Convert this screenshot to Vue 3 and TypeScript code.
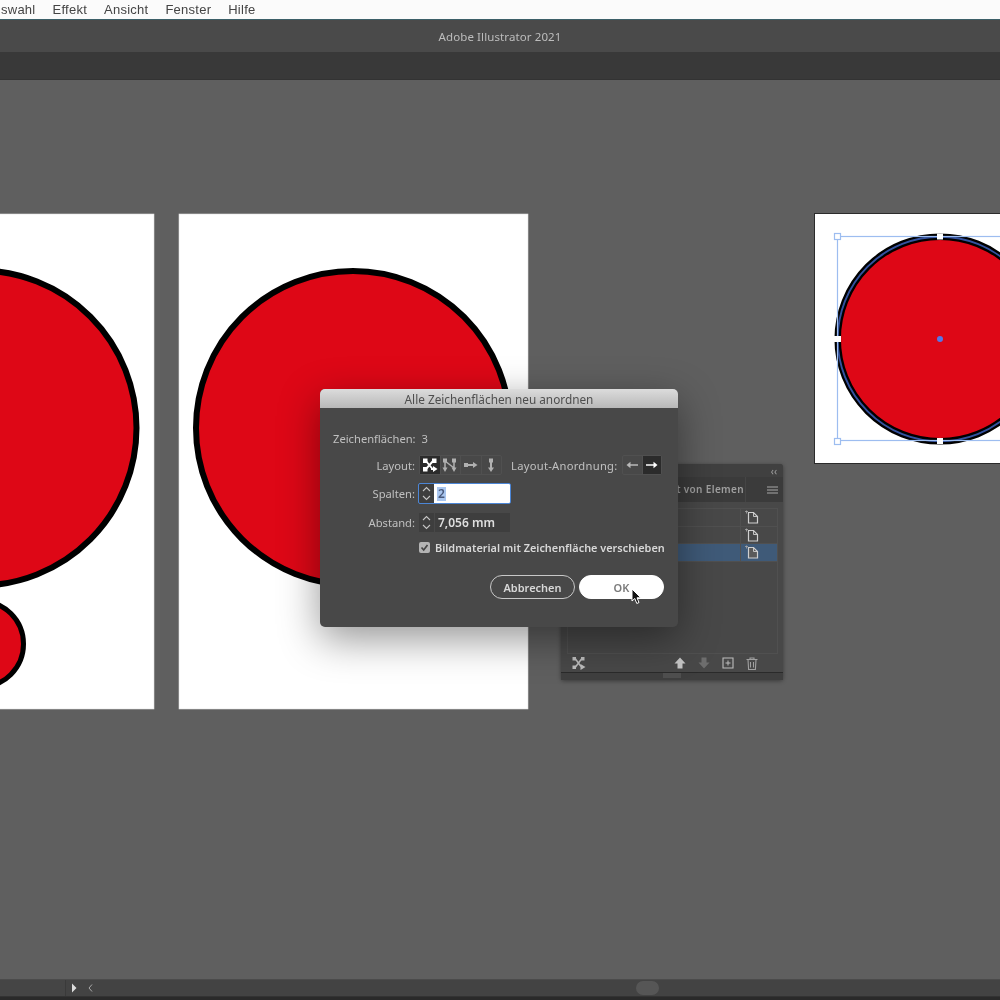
<script setup lang="ts">
const menus = ['swahl', 'Effekt', 'Ansicht', 'Fenster', 'Hilfe']
const panelRows = [{ id: 1, active: false }, { id: 2, active: false }, { id: 3, active: true }]
</script>

<template>
  <div class="app">
    <div class="menubar">
      <span v-for="m in menus" :key="m">{{ m }}</span>
    </div>
    <div class="titlebar">Adobe Illustrator 2021</div>
    <div class="toolbar"></div>

    <div class="canvas">
      <svg class="artwork" width="1000" height="900" viewBox="0 80 1000 900">
        <rect x="-10" y="214" width="164" height="495" fill="#fff" stroke="#e2e2e2" stroke-width=".6" />
        <circle cx="-21" cy="428" r="157.5" fill="#de0716" stroke="#000" stroke-width="6" />
        <circle cx="-19.500" cy="644" r="43" fill="#de0716" stroke="#000" stroke-width="5" />

        <rect x="179" y="214" width="349" height="495" fill="#fff" stroke="#e2e2e2" stroke-width=".6" />
        <circle cx="353" cy="428" r="157" fill="#de0716" stroke="#000" stroke-width="6" />

        <rect x="814.500" y="213.500" width="200" height="250" fill="#fff" stroke="#2b2b2b" />
        <circle cx="940" cy="339" r="102.300" fill="#de0716" stroke="#000" stroke-width="6.500" />
        <circle cx="940" cy="339" r="102.300" fill="none" stroke="#34529f" stroke-width="1.900" />
        <rect x="837.500" y="236.500" width="180" height="204" fill="none" stroke="#9dbdf0" stroke-width="1.200" />
        <g fill="#fff" stroke="#9dbdf0" stroke-width="1.200">
          <rect x="834.500" y="233.500" width="6" height="6" />
          <rect x="834.500" y="438.500" width="6" height="6" />
        </g>
        <g fill="#fff">
          <rect x="834" y="336" width="7" height="6" />
          <rect x="937" y="233.500" width="6" height="6" />
          <rect x="937" y="438" width="6" height="6" />
        </g>
        <circle cx="940" cy="339" r="3" fill="#5577e8" />
      </svg>
    </div>

    <div class="statusbar">
      <div class="zoombox"></div>
      <svg class="st-play" width="8" height="10" viewBox="0 0 8 10"><path d="M1 0.500 L5.500 5 L1 9.500Z" fill="#ddd" /></svg>
      <svg class="st-prev" width="8" height="10" viewBox="0 0 8 10"><path d="M5 1.500 L2 5 L5 8.500" fill="none" stroke="#aaa" /></svg>
      <div class="thumb"></div>
    </div>
    <div class="bottomline"></div>

    <section class="panel">
      <div class="panel-top"><span class="collapse">‹‹</span></div>
      <div class="panel-tabs">
        <span class="tab">Export von Elemen</span>
        <svg width="11" height="8" viewBox="0 0 11 8"><path d="M0 1h11M0 4h11M0 7h11" stroke="#a8a8a8" stroke-width="1.200" /></svg>
      </div>
      <div class="panel-list">
        <div v-for="r in panelRows" :key="r.id" class="panel-row" :class="{ active: r.active }">
          <div class="doc-cell">
            <svg width="14" height="14" viewBox="0 0 14 14">
              <path d="M3.500 2.500 H8.500 L12.500 6.500 V13 H3.500Z" :fill="r.active ? '#5a5a5a' : 'none'" stroke="#d0d0d0" stroke-width="1.200" />
              <path d="M8.500 2.500 V6.500 H12.500" fill="none" stroke="#d0d0d0" stroke-width=".9" />
              <path d="M1.500 .5 V3.500 M0 1.500 H3" stroke="#a8a8a8" stroke-width=".8" />
            </svg>
          </div>
        </div>
      </div>
      <div class="panel-foot">
        <svg class="foot-arr" width="14" height="14" viewBox="0 0 14 14">
          <rect x="0.500" y="1" width="3.500" height="3.500" fill="#bdbdbd" />
          <rect x="0.500" y="9.500" width="3.500" height="3.500" fill="#bdbdbd" />
          <rect x="9" y="1" width="3.500" height="3.500" fill="#bdbdbd" />
          <path d="M3.500 3 L9 10.500 M3.500 11 L9.500 3" fill="none" stroke="#bdbdbd" stroke-width="1.500" />
          <path d="M8.500 8 L13.500 11 L8.500 14Z" fill="#bdbdbd" />
        </svg>
        <div class="foot-right">
          <svg width="12" height="12" viewBox="0 0 12 12"><path d="M6 0.500 L11.500 6.500 H8.500 V11.500 H3.500 V6.500 H0.500Z" fill="#c4c4c4" /></svg>
          <svg width="12" height="12" viewBox="0 0 12 12"><path d="M6 11.500 L11.500 5.500 H8.500 V0.500 H3.500 V5.500 H0.500Z" fill="#6e6e6e" /></svg>
          <svg width="12" height="12" viewBox="0 0 12 12"><path d="M1 1h10v10H1z" fill="none" stroke="#bdbdbd" stroke-width="1.100" /><path d="M6 3.500v5M3.500 6h5" stroke="#bdbdbd" /></svg>
          <svg width="12" height="13" viewBox="0 0 12 13"><path d="M0.500 2.500h11M4 2.500V1h4v1.500M2 2.500l.6 10h6.800l.6-10" fill="none" stroke="#a0a0a0" stroke-width="1.100" /><path d="M4.500 5v5.500M7.500 5v5.500" stroke="#a0a0a0" /></svg>
        </div>
      </div>
      <div class="panel-grip"><span class="grip"></span></div>
    </section>

    <section class="dialog">
      <header class="dlg-title">Alle Zeichenflächen neu anordnen</header>
      <div class="row-count">Zeichenflächen:&nbsp; 3</div>

      <div class="row row-layout">
        <label class="lbl">Layout:</label>
        <div class="iconset">
          <span class="cell on">
            <svg width="16" height="14" viewBox="0 0 16 14">
              <rect x="1" y="0.500" width="4.500" height="4.500" fill="#fff" />
              <rect x="1" y="9" width="4.500" height="4.500" fill="#fff" />
              <rect x="10" y="0.500" width="4.500" height="4.500" fill="#fff" />
              <path d="M4 3 L10.500 11 M4 11 L11 3 M9 11 H12" fill="none" stroke="#fff" stroke-width="1.900" />
              <path d="M11 8 L15.500 11 L11 14Z" fill="#fff" />
            </svg>
          </span>
          <span class="cell">
            <svg width="16" height="15" viewBox="0 0 16 15">
              <rect x="1" y="0.500" width="4" height="4" fill="#b0b0b0" />
              <rect x="10" y="0.500" width="4" height="4" fill="#b0b0b0" />
              <path d="M3 3 V10 M12 3 V10 M3 3 L12 10" fill="none" stroke="#b0b0b0" stroke-width="1.500" />
              <path d="M0.500 9.500 H5.500 L3 14Z M9.500 9.500 H14.500 L12 14Z" fill="#b0b0b0" />
            </svg>
          </span>
          <span class="cell">
            <svg width="16" height="10" viewBox="0 0 16 10">
              <rect x="1" y="3" width="4" height="4" fill="#b0b0b0" />
              <rect x="5" y="4" width="6" height="2" fill="#b0b0b0" />
              <path d="M10 2 L14.500 5 L10 8Z" fill="#b0b0b0" />
            </svg>
          </span>
          <span class="cell">
            <svg width="10" height="15" viewBox="0 0 10 15">
              <rect x="3" y="0.500" width="4" height="4" fill="#b0b0b0" />
              <rect x="4" y="4" width="2" height="6" fill="#b0b0b0" />
              <path d="M2 9.500 H8 L5 14Z" fill="#b0b0b0" />
            </svg>
          </span>
        </div>
        <label class="lbl-order">Layout-Anordnung:</label>
        <div class="iconset order">
          <span class="cell">
            <svg width="12" height="8" viewBox="0 0 12 8"><path d="M12 4H3" stroke="#b8b8b8" stroke-width="1.300" /><path d="M4.500 .8 L0.500 4 L4.500 7.200Z" fill="#b8b8b8" /></svg>
          </span>
          <span class="cell on">
            <svg width="12" height="8" viewBox="0 0 12 8"><path d="M0 4H9" stroke="#fff" stroke-width="1.300" /><path d="M7.500 .8 L11.500 4 L7.500 7.200Z" fill="#fff" /></svg>
          </span>
        </div>
      </div>

      <div class="row row-cols">
        <label class="lbl">Spalten:</label>
        <div class="field focus">
          <span class="stepper">
            <svg width="9" height="15" viewBox="0 0 9 15"><path d="M1 5 L4.500 1.500 L8 5M1 10 L4.500 13.500 L8 10" fill="none" stroke="#c4c4c4" stroke-width="1.100" /></svg>
          </span>
          <span class="input white"><span class="sel">2</span></span>
        </div>
      </div>

      <div class="row row-gap">
        <label class="lbl">Abstand:</label>
        <div class="field">
          <span class="stepper">
            <svg width="9" height="15" viewBox="0 0 9 15"><path d="M1 5 L4.500 1.500 L8 5M1 10 L4.500 13.500 L8 10" fill="none" stroke="#c4c4c4" stroke-width="1.100" /></svg>
          </span>
          <span class="input">7,056 mm</span>
        </div>
      </div>

      <div class="row row-check">
        <span class="checkbox">
          <svg width="11" height="11" viewBox="0 0 11 11"><path d="M2.500 5.500 L4.700 8 L8.500 3" fill="none" stroke="#444" stroke-width="1.700" /></svg>
        </span>
        <span class="check-text">Bildmaterial mit Zeichenfläche verschieben</span>
      </div>

      <div class="row-buttons">
        <button class="btn">Abbrechen</button>
        <button class="btn primary">OK</button>
      </div>
    </section>

    <svg class="cursor" width="12" height="18" viewBox="0 0 12 18">
      <path d="M1 1 V13 L3.800 10.500 L5.800 15.500 L8 14.500 L6 9.800 H9.800Z" fill="#111" stroke="#fff" stroke-width="1" />
    </svg>
  </div>
</template>

<style scoped>
.app {
  position: relative;
  width: 1000px;
  height: 1000px;
  overflow: hidden;
  display: flex;
  flex-direction: column;
  background: #5f5f5f;
  font-family: "Noto Sans", "Liberation Sans", sans-serif;
  filter: blur(0.45px);
}

.menubar {
  height: 19px;
  flex: none;
  display: flex;
  align-items: center;
  gap: 17px;
  padding-left: 1px;
  background: #fbfbfb;
  border-bottom: 1px solid #3c5f68;
  box-sizing: content-box;
  font-family: "Liberation Sans", sans-serif;
  font-size: 13px;
  letter-spacing: 0.25px;
  color: #444;
}

.titlebar {
  height: 32px;
  flex: none;
  display: flex;
  align-items: center;
  justify-content: center;
  background: #4a4a4a;
  font-size: 11.5px;
  letter-spacing: 0.1px;
  color: #bdbdbd;
}

.toolbar {
  height: 27px;
  flex: none;
  background: #393939;
  border-bottom: 1px solid #333;
  box-sizing: content-box;
}

.canvas {
  flex: 1;
  position: relative;
  overflow: hidden;
  background: #5f5f5f;
}

.artwork {
  display: block;
}

.statusbar {
  height: 16px;
  flex: none;
  display: flex;
  align-items: center;
  background: #434343;
  border-top: 1px solid #4b4b4b;
  border-bottom: 1px solid #333;
  position: relative;
}

.zoombox {
  width: 65px;
  height: 100%;
  border-right: 1px solid #3a3a3a;
  background: #454545;
}

.st-play {
  margin-left: 5px;
}

.st-prev {
  margin-left: 8px;
}

.thumb {
  position: absolute;
  left: 636px;
  top: 1px;
  width: 23px;
  height: 14px;
  border-radius: 7px;
  background: #565656;
}

.bottomline {
  height: 3px;
  flex: none;
  background: #2a2a2a;
}

/* panel behind the dialog */
.panel {
  position: absolute;
  left: 561px;
  top: 464px;
  width: 222px;
  height: 216px;
  display: flex;
  flex-direction: column;
  background: #484848;
  border-radius: 3px;
  box-shadow: 0 1px 4px rgba(0, 0, 0, 0.4);
}

.panel-top {
  height: 13px;
  flex: none;
  display: flex;
  justify-content: flex-end;
  align-items: center;
  padding-right: 6px;
  background: #404040;
  border-radius: 3px 3px 0 0;
}

.collapse {
  font-size: 10px;
  line-height: 10px;
  color: #a0a0a0;
}

.panel-tabs {
  height: 25px;
  flex: none;
  display: flex;
  align-items: center;
  justify-content: flex-end;
  gap: 21px;
  padding-right: 5px;
  background: #3b3b3b;
  font-size: 10px;
  font-weight: 600;
  letter-spacing: 0.35px;
  color: #a0a0a0;
}

.tab {
  line-height: 25px;
  padding-right: 1px;
  border-right: 1px solid #454545;
}

.panel-list {
  flex: 1;
  margin: 6px 5px 0 6px;
  border: 1px solid #505050;
}

.panel-row {
  height: 17.5px;
  display: flex;
  justify-content: flex-end;
  border-bottom: 1px solid #505050;
  box-sizing: border-box;
}

.panel-row.active {
  background: #3f5a78;
}

.doc-cell {
  width: 37px;
  display: flex;
  align-items: center;
  padding-left: 4px;
  box-sizing: border-box;
  border-left: 1px solid #505050;
}

.panel-foot {
  height: 18px;
  flex: none;
  display: flex;
  align-items: center;
  justify-content: space-between;
  padding: 0 25px 0 11px;
}

.foot-right {
  display: flex;
  align-items: center;
  gap: 12px;
}

.panel-grip {
  height: 8px;
  flex: none;
  display: flex;
  justify-content: center;
  background: #3f3f3f;
  border-top: 1px solid #2a2a2a;
  box-sizing: border-box;
}

.grip {
  width: 18px;
  height: 5px;
  background: #4f4f4f;
}

/* dialog */
.dialog {
  position: absolute;
  left: 320px;
  top: 389px;
  width: 358px;
  height: 238px;
  background: #484848;
  border-radius: 5px;
  overflow: hidden;
  box-shadow: 0 12px 40px rgba(0, 0, 0, 0.42);
  font-size: 11.2px;
  color: #c0c0c0;
}

.dlg-title {
  height: 19px;
  display: flex;
  align-items: center;
  justify-content: center;
  background: linear-gradient(#dcdcdc, #b8b8b8);
  font-size: 11.8px;
  color: #4e4e4e;
}

.row-count {
  height: 18px;
  margin-top: 21px;
  padding-left: 13px;
  display: flex;
  align-items: center;
}

.row {
  display: flex;
  align-items: center;
}

.lbl {
  width: 95px;
  text-align: right;
  flex: none;
}

.row-layout {
  height: 22px;
  margin-top: 7px;
}

.iconset {
  margin-left: 4px;
  display: flex;
  height: 20px;
  width: 83px;
  border: 1px solid #505050;
  border-radius: 2px;
  box-sizing: border-box;
}

.iconset.order {
  width: 40px;
  margin-left: 4px;
}

.cell {
  flex: 1;
  display: flex;
  align-items: center;
  justify-content: center;
  border-right: 1px solid #505050;
}

.cell:last-child {
  border-right: none;
}

.cell.on {
  background: #2b2b2b;
}

.lbl-order {
  margin-left: 9px;
  width: 107px;
  white-space: nowrap;
  letter-spacing: 0.27px;
}

.row-cols {
  height: 19px;
  margin-top: 8px;
}

.row-gap {
  height: 19px;
  margin-top: 10px;
}

.field {
  margin-left: 4px;
  display: flex;
  gap: 1px;
  height: 19px;
  width: 91px;
}

.stepper {
  width: 15px;
  flex: none;
  display: flex;
  align-items: center;
  justify-content: center;
  background: #3e3e3e;
}

.input {
  flex: 1;
  display: flex;
  align-items: center;
  padding-left: 3px;
  background: #3e3e3e;
  color: #dedede;
  font-weight: 600;
  font-size: 12px;
}

.input.white {
  background: #fff;
}

.field.focus {
  outline: 1.500px solid #4c86d6;
  border-radius: 1px;
  gap: 0;
}

.sel {
  background: #a9c6ef;
  color: #48587a;
  line-height: 14px;
  padding: 0 1px;
}

.row-check {
  height: 18px;
  margin-top: 6px;
  padding-left: 99px;
  gap: 5px;
}

.checkbox {
  width: 11px;
  height: 11px;
  display: flex;
  background: #b4b4b4;
  border-radius: 2px;
}

.check-text {
  font-weight: 600;
  font-size: 10.9px;
  color: #d8d8d8;
  white-space: nowrap;
}

.row-buttons {
  display: flex;
  justify-content: flex-end;
  gap: 4px;
  margin-top: 19px;
  padding-right: 14px;
}

.btn {
  width: 85px;
  height: 24px;
  padding: 0;
  border: 1px solid #c8c8c8;
  border-radius: 12px;
  background: transparent;
  color: #d8d8d8;
  font-family: inherit;
  font-size: 11px;
  font-weight: 600;
}

.btn.primary {
  background: #fff;
  border-color: #fff;
  color: #7a7a7a;
}

.cursor {
  position: absolute;
  left: 631px;
  top: 588px;
}
</style>
